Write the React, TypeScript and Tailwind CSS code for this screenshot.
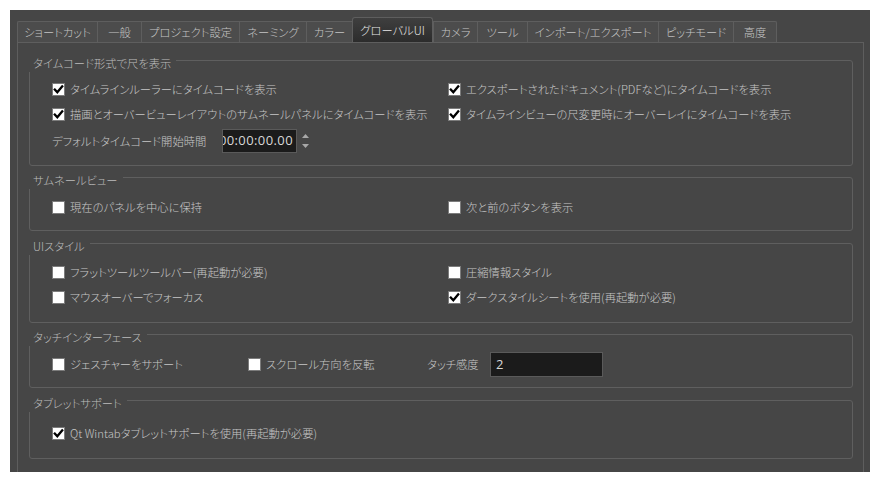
import React from "react";

const Check = ({ checked }: { checked?: boolean }) => (
  <span className="w-[13px] h-[13px] bg-white border border-[#7c7c7c] flex items-center justify-center shrink-0">
    {checked && (
      <svg width="11" height="11" viewBox="0 0 11 11">
        <path d="M1.8 5.6 L4.3 8.2 L9.2 2.4" stroke="#000" strokeWidth="2.3" fill="none" strokeLinecap="square" />
      </svg>
    )}
  </span>
);

const Item = ({ label, checked, className = "" }: { label: string; checked?: boolean; className?: string }) => (
  <div className={`flex items-center gap-[5px] h-[25px] ${className}`}>
    <Check checked={checked} />
    <span className="whitespace-nowrap">{label}</span>
  </div>
);

const Group = ({
  title,
  className,
  children,
}: {
  title: string;
  className: string;
  children: React.ReactNode;
}) => (
  <div className={`relative border border-[#5f5f5f] rounded-[3px] pl-[22px] ${className}`}>
    <div className="absolute -left-px -top-[7px] h-[18px] leading-[18px] bg-[#464646] pl-[4px] pr-[5px] text-[#bcbcbc] whitespace-nowrap">
      {title}
    </div>
    {children}
  </div>
);

const tabs: { label: string; w: string; sel?: boolean }[] = [
  { label: "ショートカット", w: "w-[80px]" },
  { label: "一般", w: "w-[44px]" },
  { label: "プロジェクト設定", w: "w-[98px]" },
  { label: "ネーミング", w: "w-[67px]" },
  { label: "カラー", w: "w-[46px]" },
  { label: "グローバルUI", w: "w-[81px]", sel: true },
  { label: "カメラ", w: "w-[44px]" },
  { label: "ツール", w: "w-[50px]" },
  { label: "インポート/エクスポート", w: "w-[131px]" },
  { label: "ピッチモード", w: "w-[75px]" },
  { label: "高度", w: "w-[44px]" },
];

export default function App() {
  return (
    <div className="w-[880px] h-[482px] bg-white p-[10px] text-[11.3px] font-light text-[#c6c6c6] [font-family:'Noto_Sans_CJK_JP','Noto_Sans',sans-serif] [font-feature-settings:'palt']">
      <div className="w-[860px] h-[462px] bg-[#464646] overflow-hidden flex flex-col pl-[7px] pr-[6px] pt-[7px]">
        {/* Tabs */}
        <div className="flex items-end h-[25px] shrink-0">
          {tabs.map((t, i) =>
            t.sel ? (
              <div
                key={i}
                className={`${t.w} h-[25px] flex items-center justify-center border border-b-0 border-[#5e5e5e] rounded-t-[3px] bg-gradient-to-b from-[#3f3f3f] to-[#2c2c2c] text-[#e8e8e8] whitespace-nowrap`}
              >
                {t.label}
              </div>
            ) : (
              <div
                key={i}
                className={`${t.w} h-[21px] flex items-center justify-center border-t border-l ${
                  i === tabs.length - 1 ? "border-r rounded-tr-[2px]" : ""
                } ${i === 0 ? "rounded-tl-[2px]" : ""} border-[#5e5e5e] bg-[#4c4c4c] text-[#c4c4c4] whitespace-nowrap`}
              >
                {t.label}
              </div>
            )
          )}
        </div>

        {/* Pane */}
        <div className="flex-1 border-t border-l border-r border-[#5e5e5e] pl-[11px] pr-[10px] pt-[17px] flex flex-col">
          <Group title="タイムコード形式で尺を表示" className="h-[106px] pt-[16px]">
            <div className="grid grid-cols-[396px_1fr]">
              <Item checked label="タイムラインルーラーにタイムコードを表示" />
              <Item checked label="エクスポートされたドキュメント(PDFなど)にタイムコードを表示" />
              <Item checked label="描画とオーバービューレイアウトのサムネールパネルにタイムコードを表示" />
              <Item checked label="タイムラインビューの尺変更時にオーバーレイにタイムコードを表示" />
            </div>
            <div className="flex items-center h-[28px]">
              <span className="w-[170px] whitespace-nowrap">デフォルトタイムコード開始時間</span>
              <div className="w-[75px] h-[24px] bg-[#1b1b1b] border border-[#5a5a5a] flex items-center justify-end overflow-hidden pr-[3px]">
                <span className="text-[13px] font-normal text-[#d8d8d8] whitespace-nowrap [font-family:'Open_Sans',sans-serif] tracking-[0.4px]">
                  00:00:00.00
                </span>
              </div>
              <div className="ml-[5px] flex flex-col gap-[6px]">
                <svg width="7" height="4" viewBox="0 0 7 4">
                  <path d="M0 4 L3.5 0 L7 4 Z" fill="#a8a8a8" />
                </svg>
                <svg width="7" height="4" viewBox="0 0 7 4">
                  <path d="M0 0 L3.5 4 L7 0 Z" fill="#a8a8a8" />
                </svg>
              </div>
            </div>
          </Group>

          <Group title="サムネールビュー" className="mt-[11px] h-[54px] pt-[17px]">
            <div className="grid grid-cols-[396px_1fr]">
              <Item label="現在のパネルを中心に保持" />
              <Item label="次と前のボタンを表示" />
            </div>
          </Group>

          <Group title="UIスタイル" className="mt-[12px] h-[80px] pt-[16px]">
            <div className="grid grid-cols-[396px_1fr]">
              <Item label="フラットツールツールバー(再起動が必要)" />
              <Item label="圧縮情報スタイル" />
              <Item label="マウスオーバーでフォーカス" />
              <Item checked label="ダークスタイルシートを使用(再起動が必要)" />
            </div>
          </Group>

          <Group title="タッチインターフェース" className="mt-[11px] h-[54px] pt-[17px]">
            <div className="flex items-center h-[25px]">
              <Item label="ジェスチャーをサポート" className="w-[196px]" />
              <Item label="スクロール方向を反転" className="w-[179px]" />
              <span className="w-[63px] whitespace-nowrap">タッチ感度</span>
              <div className="w-[113px] h-[25px] bg-[#1b1b1b] border border-[#5a5a5a] flex items-center pl-[5px] text-[13px] font-normal text-[#d8d8d8] [font-family:'Open_Sans',sans-serif]">
                2
              </div>
            </div>
          </Group>

          <Group title="タブレットサポート" className="mt-[12px] h-[59px] pt-[20px]">
            <Item checked label="Qt Wintabタブレットサポートを使用(再起動が必要)" />
          </Group>
        </div>
      </div>
    </div>
  );
}
